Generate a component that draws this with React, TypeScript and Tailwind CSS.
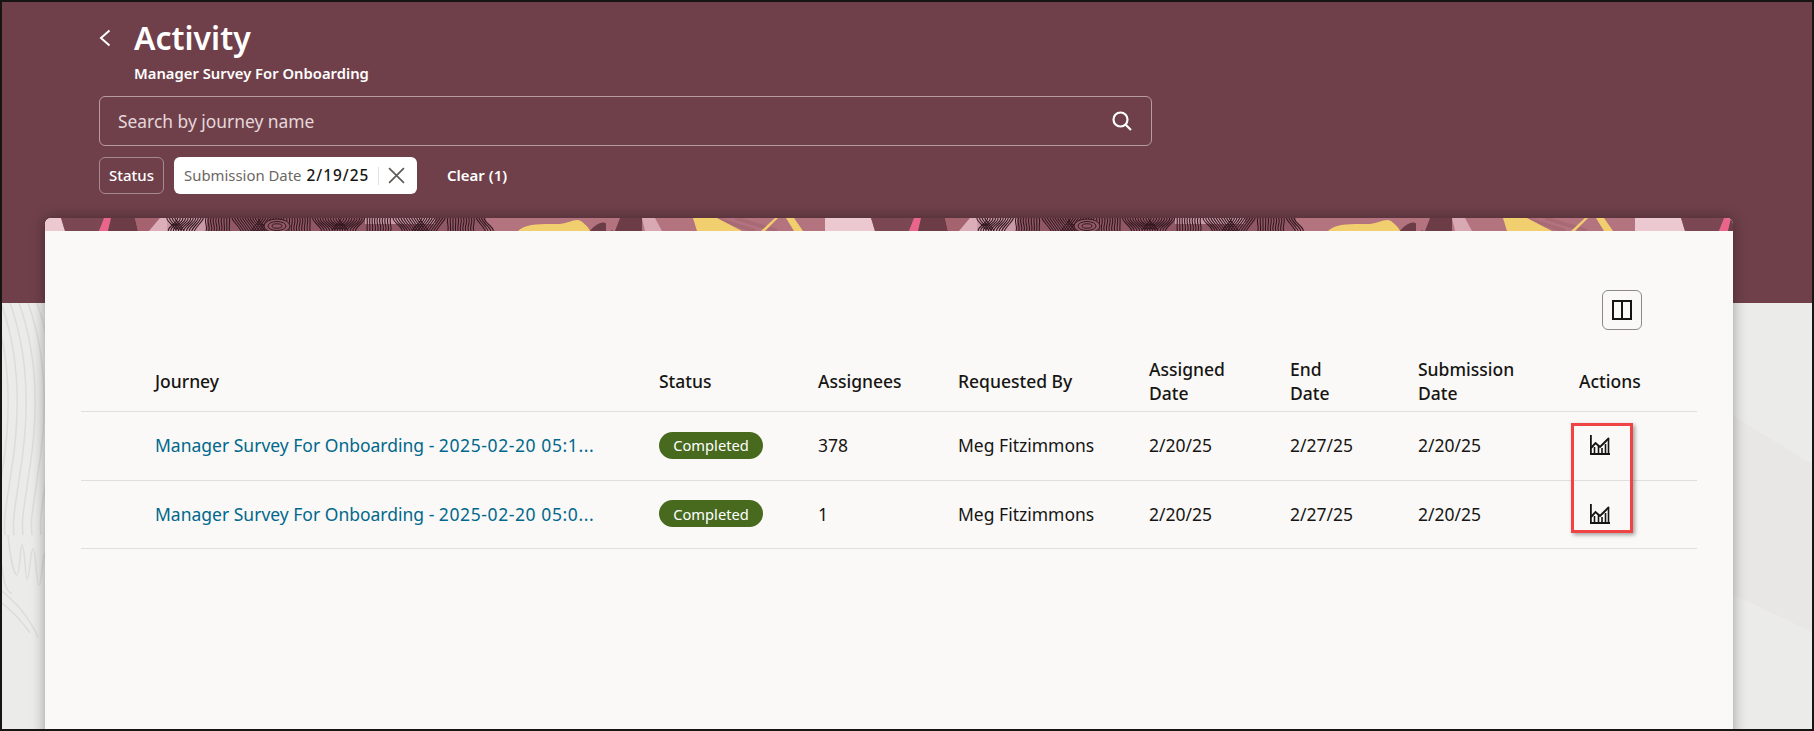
import React from 'react';

const rows = [
  { id: 'a', assignees: '378' },
  { id: 'b', assignees: '1' },
];

const stamps = ['2025-02-20 05:1...', '2025-02-20 05:0...'];

// fingerprint part of the banner strip: tile coordinates, x 152 to 471
const fingerprint = () => {
  const lines: string[] = [];
  for (let x = 152; x < 471; x += 2.6) {
    const lean = ((Math.floor(x / 27) % 3) - 1) * 9;
    const bend = Math.cos(x / 9) * 2.5;
    lines.push(`M${x.toFixed(1)} 0C${(x + bend).toFixed(1)} 4 ${(x + lean - bend).toFixed(1)} 9 ${(x + lean).toFixed(1)} 13`);
  }
  return lines.join('');
};

const BannerStrip = () => (
  <svg className="block h-[13px] w-full" viewBox="0 0 1688 13" preserveAspectRatio="none">
    <defs>
      <pattern id="strip" patternUnits="userSpaceOnUse" x="-30" y="0" width="810" height="13">
        <rect width="810" height="13" fill="#b4747f" />
        <path d="M0 0H46L50 13H0Z" fill="#ecc8d0" />
        <path d="M46 0H90L84 13H50Z" fill="#7a4753" />
        <path d="M89 0H96L93 13H84Z" fill="#e9668a" />
        <path d="M96 0H120L123 13H93Z" fill="#6c3d47" />
        <path d="M120 0H145L134 13H123Z" fill="#a5626f" />
        <path d="M145 0H155L152 13H134Z" fill="#dcaeb9" />
        <rect x="152" width="319" height="13" fill="#8f5864" />
        <rect x="152" width="40" height="13" fill="#c99aa5" />
        <rect x="350" width="70" height="6" fill="#c99aa5" />
        <path d={fingerprint()} fill="none" stroke="#33161f" strokeWidth="1.1" />
        <ellipse cx="262" cy="8" rx="13" ry="7" fill="#8f5864" stroke="#33161f" />
        <ellipse cx="262" cy="8" rx="9" ry="4.5" fill="none" stroke="#33161f" />
        <ellipse cx="262" cy="8" rx="5" ry="2.2" fill="none" stroke="#33161f" />
        <path d="M503 13C510 5 530 6 545 6C555 5 560 0 566 3C570 6 574 10 575 13Z" fill="#f2cf6e" />
        <path d="M575 13C580 6 588 2 592 6L598 13Z" fill="#6c3d47" />
        <path d="M591 0H606L596 13H591Z" fill="#b4747f" />
        <path d="M605 0H627V13H600Z" fill="#6c3d47" />
        <path d="M627 0H640L647 13H630Z" fill="#d8a8b3" />
        <path d="M700 0L740 13M720 0L762 13" stroke="#9c5f6c" strokeWidth="4" opacity="0.5" />
        <path d="M678 0H702L727 13H682Z" fill="#f2cf6e" />
        <path d="M760 0H763L750 13H746Z" fill="#f2cf6e" />
        <path d="M771 0H779L788 13H779Z" fill="#f2cf6e" />
      </pattern>
    </defs>
    <rect width="1688" height="13" fill="url(#strip)" />
  </svg>
);

const ChartIcon = () => (
  <svg className="h-5 w-5" viewBox="0 0 20 20" fill="none" stroke="#161513" strokeWidth="1.6">
    <path d="M0.9 0V19H20" strokeWidth="1.8" />
    <path d="M4.5 12V19M8.5 10V19M12 13V19M15.5 9V19M18.5 4V19" />
    <path d="M1 13L5.5 8L10 12L14 8L19 3" strokeWidth="1.9" />
  </svg>
);

const contourOffsets = [-18, -9, 0, 9, 18, 27, 36];

const Contours = () => (
  <svg className="absolute left-0 top-[301px] h-[340px] w-[44px]" viewBox="0 0 44 340" fill="none" stroke="#dcdcda" strokeWidth="1.5">
    {contourOffsets.map((dx) => (
      <path key={dx} d="M8 0C26 50 28 110 18 170C14 200 10 215 12 232" transform={`translate(${dx} 0)`} />
    ))}
    <path d="M6 232C9 262 13 272 15 272C18 272 18 242 20 242C23 242 23 276 25 276C28 276 28 246 31 246C34 246 34 282 37 282C40 282 40 250 44 250" />
    <path d="M0 262C2 285 6 290 10 290" />
    <path d="M0 288C14 300 26 312 36 334" />
    <path d="M0 300C10 308 20 318 28 330" />
  </svg>
);

const App: React.FC = () => {
  return (
    <div className="relative h-[731px] overflow-hidden border-2 border-[#161513] bg-[#ebebe9] font-['Noto_Sans',sans-serif] text-[#161513]">
      <Contours />
      <svg className="absolute bottom-0 right-0 h-[314px] w-[80px]" viewBox="0 0 80 314" fill="#e8e7e5">
        <path d="M0 0L80 49V217L0 179Z" />
      </svg>

      {/* Header */}
      <header className="relative h-[301px] bg-[#6f404a] pl-[97px] pt-[15px] text-white">
        <div className="flex h-[42px] items-center">
          <svg className="h-[18px] w-[12px]" viewBox="0 0 12 18" fill="none" stroke="white" strokeWidth="2">
            <path d="M10.5 1.5L2 9L10.5 16.5" />
          </svg>
          <h1 className="ml-[23px] text-[32px] font-semibold leading-none">Activity</h1>
        </div>
        <p className="ml-[35px] mt-[3px] text-[14.8px] font-semibold leading-[22px]">Manager Survey For Onboarding</p>
        <div className="mt-[12px] flex h-[50px] w-[1053px] items-center justify-between rounded-[6px] border border-[#b99ca3] pl-[18px] pr-[18px]">
          <span className="text-[17.4px] text-[#e6d8da]">Search by journey name</span>
          <svg className="h-[22px] w-[22px]" viewBox="0 0 22 22" fill="none" stroke="white" strokeWidth="2.2">
            <circle cx="9.5" cy="9.5" r="7" />
            <path d="M14.5 14.5L20 20" />
          </svg>
        </div>
        <div className="mt-[11px] flex h-[37px] items-center text-[15px]">
          <span className="flex h-full w-[65px] items-center justify-center rounded-[6px] border border-[#a58a90] font-medium">Status</span>
          <span className="ml-[10px] flex h-full w-[243px] items-center rounded-[6px] bg-white pl-[10px] text-[14.9px] text-[#6b6762]">
            Submission Date
            <b className="ml-[5px] text-[15.4px] font-medium tracking-[1px] text-[#161513]">2/19/25</b>
            <span className="ml-[9px] h-[18px] w-px bg-[#e4e2df]" />
            <svg className="ml-[9px] h-[17px] w-[17px]" viewBox="0 0 16 16" fill="none" stroke="#5f5b57" strokeWidth="1.6">
              <path d="M1 1L15 15M15 1L1 15" />
            </svg>
          </span>
          <span className="ml-[30px] font-semibold">Clear (1)</span>
        </div>
      </header>

      {/* Card */}
      <main className="relative -mt-[85px] ml-[43px] h-[560px] w-[1688px] rounded-t-[6px] bg-[#faf9f7] shadow-[0_0_14px_rgba(0,0,0,0.35)]">
        <div className="overflow-hidden rounded-t-[6px]">
          <BannerStrip />
        </div>
        <div className="flex justify-end pr-[91px] pt-[59px]">
          <button className="flex h-10 w-10 items-center justify-center rounded-[6px] border border-[#8d8a86]">
            <svg className="h-5 w-5" viewBox="0 0 20 20" fill="none" stroke="#161513" strokeWidth="2">
              <path d="M1 1H19V19H1ZM10 1V19" />
            </svg>
          </button>
        </div>

        <div className="ml-[36px] mt-[20px] w-[1616px]">
          <div className="grid h-[62px] grid-cols-[578px_159px_140px_191px_141px_128px_161px_118px] items-center border-b border-[#e0dfdc] text-[17.5px] font-medium leading-[24px]">
            <span className="pl-[74px]">Journey</span>
            <span>Status</span>
            <span>Assignees</span>
            <span>Requested By</span>
            <span>Assigned<br />Date</span>
            <span>End<br />Date</span>
            <span>Submission<br />Date</span>
            <span>Actions</span>
          </div>
          {rows.map((row, i) => (
            <div
              key={row.id}
              className="grid h-[68.5px] grid-cols-[578px_159px_140px_191px_141px_128px_161px_118px] items-center border-b border-[#e0dfdc] pb-[1px] text-[17.5px]"
            >
              <a className="ml-[74px] whitespace-nowrap text-[#00688c]">
                Manager Survey For Onboarding - <span className="tracking-[0.6px]">{stamps[i]}</span>
              </a>
              <span className="flex h-[27px] w-[104px] items-center justify-center rounded-full bg-[#476a1f] text-[14.7px] text-white">Completed</span>
              <span>{row.assignees}</span>
              <span>Meg Fitzimmons</span>
              <span>2/20/25</span>
              <span>2/27/25</span>
              <span>2/20/25</span>
              <span className="pl-[11px]"><ChartIcon /></span>
            </div>
          ))}
        </div>

        {/* Callout round the action icons */}
        <div className="absolute left-[1526px] top-[205px] h-[110px] w-[62px] border-[3px] border-[#f04444] shadow-[2px_2px_4px_rgba(0,0,0,0.35)]" />
      </main>
    </div>
  );
};

export default App;
